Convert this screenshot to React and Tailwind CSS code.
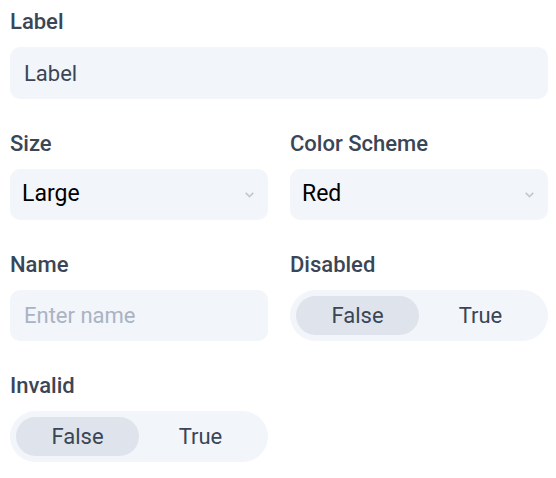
import React from "react";

const font = { fontFamily: "Roboto, 'Noto Sans', sans-serif" };

function Label({ children }) {
  return (
    <div className="text-[22px] font-medium leading-[24px] text-[#3a4656] h-[24px]">
      {children}
    </div>
  );
}

function Field({ label, children }) {
  return (
    <div className="flex flex-col gap-[13px]">
      <Label>{label}</Label>
      {children}
    </div>
  );
}

function Select({ value }) {
  return (
    <div className="h-[51px] rounded-[10px] bg-[#f2f5fa] flex items-center justify-between pl-[12px] pr-[12px]">
      <span className="text-[23px] text-black">{value}</span>
      <svg width="13" height="13" viewBox="0 0 12 12" fill="none">
        <path d="M2.5 4.5 L6 8 L9.5 4.5" stroke="#c3c8d0" strokeWidth="1.5" />
      </svg>
    </div>
  );
}

function Toggle() {
  return (
    <div className="h-[51px] rounded-full bg-[#f2f5fa] p-[6px] flex">
      <div className="flex-1 rounded-full bg-[#dfe3eb] flex items-center justify-center text-[22px] text-[#3a4656]">
        False
      </div>
      <div className="flex-1 flex items-center justify-center text-[22px] text-[#3a4656]">
        True
      </div>
    </div>
  );
}

export default function App() {
  return (
    <div style={font} className="bg-white w-[556px] h-[478px] pl-[10px] pr-[8px] pt-[10px] flex flex-col gap-[33px]">
      <Field label="Label">
        <div className="h-[52px] rounded-[10px] bg-[#f2f5fa] flex items-center px-[14px] text-[22px] text-[#3a4656]">
          Label
        </div>
      </Field>
      <div className="grid grid-cols-2 gap-x-[22px] gap-y-[33px]">
        <Field label="Size">
          <Select value="Large" />
        </Field>
        <Field label="Color Scheme">
          <Select value="Red" />
        </Field>
        <Field label="Name">
          <div className="h-[51px] rounded-[10px] bg-[#f2f5fa] flex items-center px-[14px] text-[22px] text-[#a9b3c3]">
            Enter name
          </div>
        </Field>
        <Field label="Disabled">
          <Toggle />
        </Field>
        <Field label="Invalid">
          <Toggle />
        </Field>
      </div>
    </div>
  );
}
